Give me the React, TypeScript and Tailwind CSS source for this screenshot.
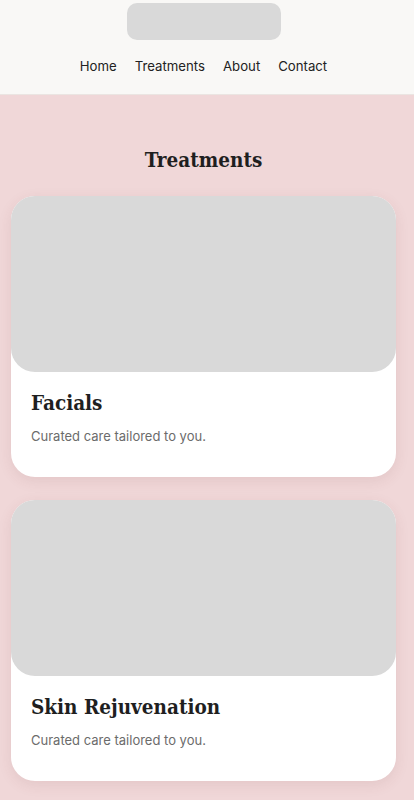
import React from "react";

const treatments = ["Facials", "Skin Rejuvenation"];

const serif = "font-['DejaVu_Serif_Condensed','DejaVu_Serif',serif] [font-stretch:condensed]";

const TreatmentCard = ({ title }: { title: string }) => (
  <div className="bg-white rounded-[24px] overflow-hidden shadow-[0_4px_14px_rgba(120,60,60,0.10)]">
    <div className="h-[176px] bg-[#d9d9d9] rounded-b-[24px]" />
    <div className="px-5 pt-[17px] pb-[31px]">
      <h3 className={`${serif} font-bold text-[20.5px] leading-[28px] text-[#1f1f1f]`}>
        {title}
      </h3>
      <p className="mt-[9px] text-[13px] leading-[20px] text-[#6b6b6b]">
        Curated care tailored to you.
      </p>
    </div>
  </div>
);

export default function App() {
  return (
    <div className="min-h-[800px] bg-[#f0d7d8] font-['Inter','Noto_Sans',sans-serif]">
      <header className="bg-[#f9f8f6] border-b border-[#ebe5e2]">
        <div className="w-[407px] pt-[3px] pb-[18px] flex flex-col items-center">
          <div className="w-[154px] h-[37px] rounded-[10px] bg-[#d9d9d9]" />
          <nav className="mt-[16px] flex gap-[18px] text-[13.2px] leading-[20px] text-[#222]">
            <a>Home</a>
            <a>Treatments</a>
            <a>About</a>
            <a>Contact</a>
          </nav>
        </div>
      </header>
      <main className="w-[407px] px-[11px] pt-[51px] pb-6">
        <h2 className={`text-center ${serif} font-bold text-[20.5px] leading-[28px] text-[#1f1f1f]`}>
          Treatments
        </h2>
        <div className="mt-[22px] flex flex-col gap-[23px]">
          {treatments.map((t) => (
            <TreatmentCard key={t} title={t} />
          ))}
        </div>
      </main>
    </div>
  );
}
